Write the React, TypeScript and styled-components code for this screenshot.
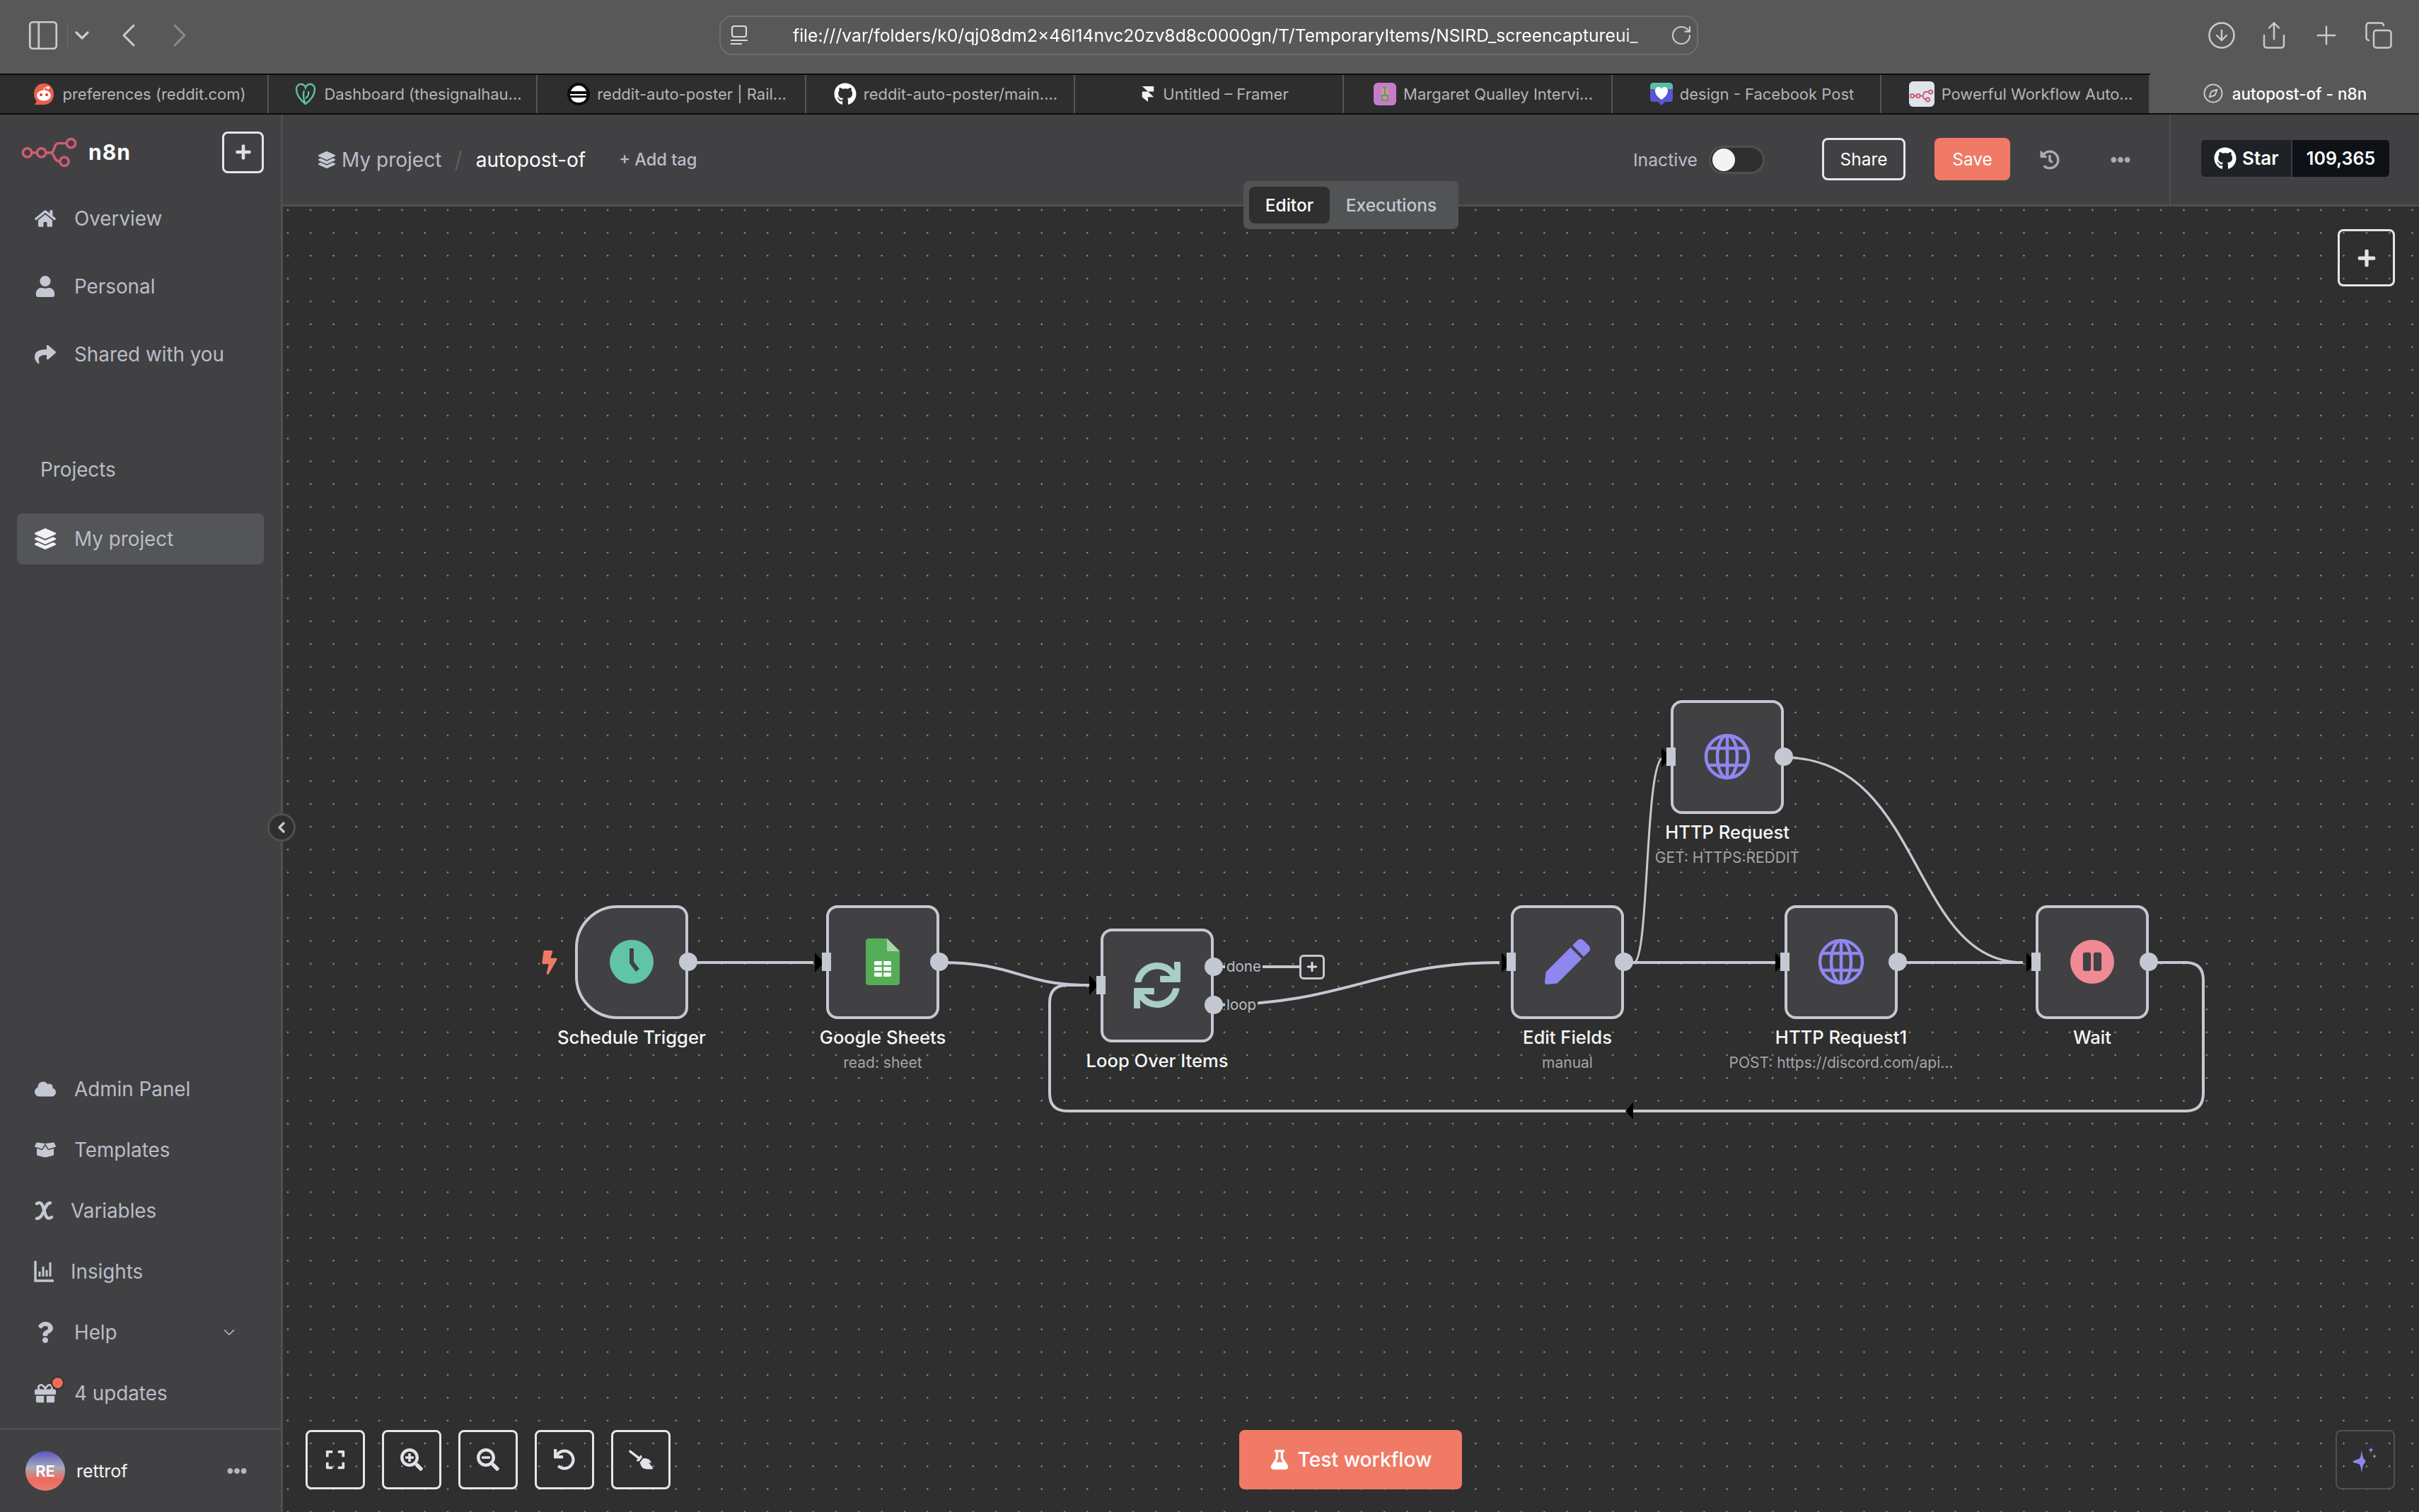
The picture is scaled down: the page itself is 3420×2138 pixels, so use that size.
import React from 'react';
import styled, { createGlobalStyle } from 'styled-components';
import {
  ChevronDown, ChevronLeft, ChevronRight, CircleArrowDown, Compass, Copy, PanelLeft, Plus, RotateCw, Share,
} from 'lucide-react';
import {
  FaBolt, FaBoxOpen, FaBroom, FaCloud, FaEllipsisH, FaExpand, FaFlask, FaGift, FaGithub, FaHistory, FaHome,
  FaLayerGroup, FaPause, FaPen, FaPlus, FaQuestion, FaSearchMinus, FaSearchPlus, FaShare, FaSync, FaUndo, FaUser,
} from 'react-icons/fa';

// page coordinates of the canvas origin, nodes and wires are given in page px
const CANVAS_X = 400;
const CANVAS_Y = 291.5;

const GlobalStyle = createGlobalStyle`
  html, body {
    margin: 0;
    padding: 0;
    width: 3420px;
    height: 2138px;
    overflow: hidden;
    background: #2e2f2e;
    font-family: Inter, "Noto Sans", sans-serif;
  }
  * { box-sizing: border-box; }
`;

const Page = styled.div`
  display: flex;
  flex-direction: column;
  width: 3420px;
  height: 2138px;
`;

/* browser chrome */
const Toolbar = styled.div`
  display: flex;
  align-items: center;
  height: 104px;
  padding: 0 36px 4px 36px;
  background: #585858;
  color: #c9cbcf;
`;

const ToolIcons = styled.div`
  display: flex;
  align-items: center;
  width: 981px;
`;

const SideToggle = styled.div`
  display: flex;
  align-items: center;
  height: 36px;
  padding-right: 9px;
  margin-right: 4px;
  border-right: 1px solid #6b6b6b;
`;

const NavArrows = styled.div`
  display: flex;
  align-items: center;
  gap: 16px;
  margin-left: 22px;
`;

const AddressBar = styled.div`
  display: flex;
  align-items: center;
  width: 1384px;
  height: 56px;
  padding: 0 6px 0 14px;
  border: 2px solid #6e6e6e;
  border-radius: 18px;
`;

const AddressText = styled.div`
  flex: 1;
  margin-left: 62px;
  color: #fff;
  font-size: 24.7px;
  white-space: nowrap;
  -webkit-mask-image: linear-gradient(to right, #000 94%, rgba(0, 0, 0, 0.35) 100%);
  mask-image: linear-gradient(to right, #000 94%, rgba(0, 0, 0, 0.35) 100%);
`;

const ChromeActions = styled.div`
  display: flex;
  align-items: center;
  gap: 32px;
  margin-left: auto;
`;

const TabStrip = styled.div`
  display: flex;
  height: 58px;
  background: #2e2e2e;
  border-top: 2px solid #0c0c0c;
  border-bottom: 2px solid #0c0c0c;
`;

const Tab = styled.div<{ $active?: boolean }>`
  display: flex;
  align-items: center;
  justify-content: center;
  gap: ${({ $active }) => ($active ? 12 : 10)}px;
  width: 380px;
  margin: ${({ $active }) => ($active ? '-2px 0 0' : '0')};
  padding-left: ${({ $active }) => ($active ? 0 : 16)}px;
  height: ${({ $active }) => ($active ? '56px' : 'auto')};
  border-right: ${({ $active }) => ($active ? 'none' : '2px solid #555')};
  background: ${({ $active }) => ($active ? '#585858' : 'transparent')};
  color: ${({ $active }) => ($active ? '#fff' : '#b4b4b4')};
  font-size: ${({ $active }) => ($active ? 22.5 : 22)}px;
  font-weight: ${({ $active }) => ($active ? 500 : 400)};
  white-space: nowrap;
`;

const Favicon = styled.svg`
  flex: none;
  width: 32px;
  height: 32px;
`;

/* app body */
const Body = styled.div`
  display: flex;
  flex: 1;
  min-height: 0;
`;

const Sidebar = styled.aside`
  position: relative;
  display: flex;
  flex-direction: column;
  flex: none;
  width: 400px;
  background: #414143;
  border-right: 3px solid #4f4f51;
`;

const LogoRow = styled.div`
  display: flex;
  align-items: center;
  justify-content: space-between;
  height: 111px;
  padding: 0 24px 5px 30px;
`;

const Logo = styled.div`
  display: flex;
  align-items: center;
  gap: 15px;
  color: #fff;
  font-size: 30px;
  font-weight: 700;
  letter-spacing: 1px;
`;

const IconButton = styled.button<{ $size?: number; $muted?: boolean }>`
  display: flex;
  align-items: center;
  justify-content: center;
  width: ${({ $size }) => $size ?? 59}px;
  height: ${({ $size }) => $size ?? 59}px;
  padding: 0;
  background: transparent;
  color: #dfe2e8;
  border: ${({ $muted }) => ($muted ? '2px solid #505152' : '3px solid #e4e6ea')};
  border-radius: 8px;
`;

const NavGroup = styled.nav<{ $gap: number }>`
  display: flex;
  flex-direction: column;
  gap: ${({ $gap }) => $gap}px;
  padding: 0 24px;
`;

const NavItem = styled.div<{ $active?: boolean }>`
  display: flex;
  align-items: center;
  gap: 25px;
  height: 72px;
  padding: 0 24px;
  border-radius: 8px;
  background: ${({ $active }) => ($active ? '#545557' : 'transparent')};
  color: #b9bdc7;
  font-size: 27.8px;
  white-space: nowrap;
`;

const NavIcon = styled.span<{ $narrow?: boolean; $light?: boolean }>`
  position: relative;
  display: flex;
  align-items: center;
  justify-content: center;
  flex: none;
  width: ${({ $narrow }) => ($narrow ? 28 : 32)}px;
  margin-right: ${({ $narrow }) => ($narrow ? -1 : 0)}px;
  color: ${({ $light }) => ($light ? '#f1f2f4' : '#c3c8d2')};
  font-size: 30px;
`;

const Badge = styled.span`
  position: absolute;
  top: -7px;
  right: -9px;
  width: 15px;
  height: 15px;
  border-radius: 50%;
  background: #f0695a;
  box-shadow: 0 0 0 2px #2e2f2e;
`;

const Chevron = styled.span`
  display: flex;
  margin-left: auto;
  margin-right: 12px;
  color: #b9bdc7;
`;

const ProjectsHeading = styled.div`
  margin: 110px 0 45px 57px;
  color: #b9bdc7;
  font-size: 27.8px;
`;

const BottomNav = styled.div`
  margin-top: auto;
  padding-bottom: 13px;
`;

const UserRow = styled.div`
  display: flex;
  align-items: center;
  height: 119px;
  padding: 0 48px 0 36px;
  border-top: 3px solid #4f4f51;
`;

const Avatar = styled.div`
  display: flex;
  align-items: center;
  justify-content: center;
  width: 56px;
  height: 56px;
  border-radius: 50%;
  background: linear-gradient(180deg, #5a57c4 0%, #a9a9b9 42%, #ef6a5a 72%, #ea7f79 100%);
  color: #fff;
  font-size: 22px;
  font-weight: 600;
`;

const UserName = styled.div`
  margin-left: 16px;
  color: #f3f4f6;
  font-size: 25px;
`;

const DotsMuted = styled.span`
  display: flex;
  margin-left: auto;
  color: #b4b7be;
  font-size: 28px;
`;

const CollapseKnob = styled.div`
  position: absolute;
  top: 988px;
  right: -21px;
  z-index: 5;
  display: flex;
  align-items: center;
  justify-content: center;
  width: 40px;
  height: 40px;
  border-radius: 50%;
  background: #2e2f2e;
  border: 3px solid #4f4f51;
  color: #c3c8d2;
`;

const Main = styled.main`
  position: relative;
  display: flex;
  flex-direction: column;
  flex: 1;
  min-width: 0;
`;

const Header = styled.header`
  display: flex;
  align-items: center;
  flex: none;
  height: 130px;
  background: #414143;
  border-bottom: 3px solid #4f4f51;
`;

const Crumbs = styled.div`
  display: flex;
  align-items: center;
  margin-left: 50px;
  color: #b9bdc7;
  font-size: 28px;
`;

const CrumbIcon = styled.span`
  display: flex;
  margin-right: 9px;
  color: #c3c8d2;
  font-size: 24px;
`;

const CrumbSlash = styled.span`
  margin: 0 19px 0 18px;
  color: #5a5b5d;
  font-size: 32px;
`;

const WorkflowName = styled.span`
  color: #fff;
`;

const AddTag = styled.span`
  margin-left: 47px;
  color: #b9bdc7;
  font-size: 23.6px;
  font-weight: 500;
`;

const HeaderActions = styled.div`
  display: flex;
  align-items: center;
  margin-left: auto;
  height: 100%;
`;

const StatusLabel = styled.span`
  color: #b9bdc7;
  font-size: 24.7px;
`;

const Toggle = styled.span`
  position: relative;
  width: 79px;
  height: 40px;
  margin: 0 81px 0 16px;
  border-radius: 20px;
  background: #2e2f2e;
  border: 3px solid #4f4f51;
`;

const ToggleKnob = styled.span`
  position: absolute;
  top: 1px;
  left: 2px;
  width: 32px;
  height: 32px;
  border-radius: 50%;
  background: #f3f3f5;
`;

const ShareButton = styled.button`
  width: 118px;
  height: 60px;
  margin-bottom: 2px;
  padding: 0;
  border-radius: 8px;
  border: 3px solid #e4e6ea;
  background: transparent;
  color: #fff;
  font-family: inherit;
  font-size: 24.4px;
  font-weight: 400;
`;

const SaveButton = styled(ShareButton)`
  width: 107px;
  margin-left: 41px;
  border: none;
  background: #f07a65;
`;

const HeaderGlyph = styled.span<{ $ml: number }>`
  display: flex;
  margin-left: ${({ $ml }) => $ml}px;
  color: #a9acb3;
  font-size: 28px;
`;

const GithubBox = styled.div`
  display: flex;
  align-items: center;
  height: 100%;
  margin-left: 55px;
  padding: 0 42px 4px 43px;
  border-left: 2px solid #4f4f51;
`;

const StarButton = styled.div`
  display: flex;
  height: 52px;
  border-radius: 5px;
  overflow: hidden;
  color: #fff;
  font-size: 25px;
  font-weight: 600;
`;

const StarLabel = styled.div`
  display: flex;
  align-items: center;
  gap: 8px;
  width: 129px;
  padding-left: 18px;
  background: #1e2226;
  border-right: 2px solid #3a3d41;
  font-size: 26px;
`;

const StarCount = styled.div`
  display: flex;
  align-items: center;
  justify-content: center;
  width: 137px;
  background: #0e1116;
`;

const ViewTabs = styled.div`
  position: absolute;
  top: 94px;
  left: 1358px;
  z-index: 4;
  display: flex;
  align-items: center;
  width: 304px;
  height: 68px;
  padding: 0 8px;
  border-radius: 8px;
  background: #525355;
`;

const ViewTab = styled.div<{ $active?: boolean }>`
  display: flex;
  align-items: center;
  justify-content: center;
  width: ${({ $active }) => ($active ? 114 : 174)}px;
  height: 52px;
  border-radius: 8px;
  background: ${({ $active }) => ($active ? '#2e2f2e' : 'transparent')};
  color: ${({ $active }) => ($active ? '#fff' : '#c3c8d2')};
  font-size: 24.5px;
  font-weight: 500;
`;

/* canvas */
const Canvas = styled.div`
  position: relative;
  flex: 1;
  background-color: #2e2f2e;
  background-image: radial-gradient(circle, #8f9090 1px, transparent 1.4px);
  background-size: 32.3px 32.3px;
  background-position: -9.25px -11.15px;
`;

const Wires = styled.svg`
  position: absolute;
  inset: -1.5px 0 0 0;
  width: 100%;
  height: 1848px;
`;

const NodeSlot = styled.div<{ $x: number; $y: number }>`
  position: absolute;
  left: ${({ $x }) => $x - CANVAS_X}px;
  top: ${({ $y }) => $y - CANVAS_Y}px;
  display: flex;
  flex-direction: column;
  align-items: center;
  width: 160px;
`;

const NodeBox = styled.div<{ $trigger?: boolean }>`
  position: relative;
  display: flex;
  align-items: center;
  justify-content: center;
  width: 160px;
  height: 161px;
  background: #414143;
  border: 4px solid #c4c8d2;
  border-radius: ${({ $trigger }) => ($trigger ? '60px 16px 16px 60px' : '16px')};
`;

const NodeName = styled.div`
  margin-top: 8px;
  color: #f5f6f8;
  font-size: 25.6px;
  font-weight: 500;
  line-height: 36px;
  white-space: nowrap;
`;

const NodeSub = styled.div`
  margin-top: 4px;
  color: #a4a5a9;
  font-size: 21px;
  line-height: 28px;
  white-space: nowrap;
`;

const OutPort = styled.span<{ $top: number }>`
  position: absolute;
  top: ${({ $top }) => $top}px;
  right: -17px;
  width: 26px;
  height: 26px;
  border-radius: 50%;
  background: #c4c8d2;
`;

const InPort = styled.span<{ $top: number }>`
  position: absolute;
  top: ${({ $top }) => $top}px;
  left: -10px;
  width: 13px;
  height: 26px;
  background: #c4c8d2;
`;

const PortLabel = styled.span<{ $top: number }>`
  position: absolute;
  top: ${({ $top }) => $top}px;
  left: 172px;
  padding: 0 2px;
  background: #2e2f2e;
  color: #b9bdc7;
  font-size: 20.5px;
  line-height: 26px;
`;

const TriggerBolt = styled.span`
  position: absolute;
  left: -57px;
  top: 60px;
  display: flex;
  color: #f07a65;
  font-size: 34px;
`;

const AddStub = styled.div`
  position: absolute;
  left: ${1837 - CANVAS_X}px;
  top: ${1349 - CANVAS_Y}px;
  display: flex;
  align-items: center;
  justify-content: center;
  width: 36px;
  height: 35px;
  border: 3px solid #c4c8d2;
  border-radius: 6px;
  background: #2e2f2e;
  color: #d6d9df;
  font-size: 16px;
`;

const NodeIcon = styled.span<{ $color: string; $size: number }>`
  display: flex;
  color: ${({ $color }) => $color};
  font-size: ${({ $size }) => $size}px;
`;

const PauseDisc = styled.span`
  display: flex;
  align-items: center;
  justify-content: center;
  width: 62px;
  height: 62px;
  border-radius: 50%;
  background: #f08a95;
  color: #414143;
  font-size: 30px;
`;

const CanvasControls = styled.div`
  position: absolute;
  left: 32px;
  bottom: 32px;
  display: flex;
  gap: 24px;
`;

const FlippedGlyph = styled.span`
  display: flex;
  transform: scaleX(-1);
`;

const TestButton = styled.button`
  position: absolute;
  left: ${1752 - CANVAS_X}px;
  bottom: 32px;
  display: flex;
  align-items: center;
  justify-content: center;
  gap: 12px;
  width: 315px;
  height: 84px;
  border: none;
  border-radius: 8px;
  background: #f07a65;
  color: #fff;
  font-family: inherit;
  font-size: 28.2px;
  font-weight: 500;
`;

const CanvasPlus = styled.div`
  position: absolute;
  top: 32px;
  right: 34px;
`;

const AssistButton = styled.div`
  position: absolute;
  right: 34px;
  bottom: 32px;
`;

const TABS = [
  { title: 'preferences (reddit.com)', icon: 'reddit' },
  { title: 'Dashboard (thesignalhau...', icon: 'heart' },
  { title: 'reddit-auto-poster | Rail...', icon: 'rail' },
  { title: 'reddit-auto-poster/main....', icon: 'github' },
  { title: 'Untitled – Framer', icon: 'framer' },
  { title: 'Margaret Qualley Intervi...', icon: 'square' },
  { title: 'design - Facebook Post', icon: 'bubble' },
  { title: 'Powerful Workflow Auto...', icon: 'n8n' },
];

const N8nMark: React.FC<{ width: number; height: number }> = ({ width, height }) => (
  <svg width={width} height={height} viewBox="28 194 84 46" fill="none" stroke="#d25c72" strokeWidth="3.6">
    <circle cx="37" cy="218" r="6.5" />
    <circle cx="58" cy="218" r="6.5" />
    <circle cx="102" cy="204" r="6.5" />
    <circle cx="92" cy="231" r="6.5" />
    <path d="M44 218h7M65 218h7c6 0 4-14 11-14h12M72 218c5 0 4 13 13 13" />
  </svg>
);

const TabIcon: React.FC<{ kind: string }> = ({ kind }) => {
  switch (kind) {
    case 'reddit':
      return (
        <Favicon viewBox="0 0 32 32">
          <path d="M16 1c8 0 14 6 14 15s-6 15-14 15H3l3-5C3 23 2 20 2 16 2 7 8 1 16 1z" fill="#e8604c" />
          <ellipse cx="16" cy="18" rx="10" ry="7.5" fill="#fff" />
          <circle cx="12" cy="17" r="2" fill="#d93a26" />
          <circle cx="20" cy="17" r="2" fill="#d93a26" />
          <circle cx="22" cy="7" r="2" fill="#fff" />
          <path d="M16 11l1-4 5 0" stroke="#fff" strokeWidth="1" fill="none" />
        </Favicon>
      );
    case 'heart':
      return (
        <Favicon viewBox="0 0 32 32" fill="none" stroke="#5fc0a5" strokeWidth="2.4">
          <path d="M16 30C8 24 3 17 3 9c0-4 3-7 6-7 3 0 6 2 7 5 1-3 4-5 7-5 3 0 6 3 6 7 0 8-5 15-13 21z" />
          <path d="M16 30c-3-6-4-14-2-19M16 22c3-2 5-6 4-10" />
        </Favicon>
      );
    case 'rail':
      return (
        <Favicon viewBox="0 0 32 32">
          <circle cx="16" cy="16" r="16" fill="#0b0b0b" />
          <path d="M5 12h22c-2-5-6-8-11-8S7 7 5 12zM4 16h23v2H4zM5 21h22c-2 5-6 7-11 7s-9-2-11-7z" fill="#fff" />
        </Favicon>
      );
    case 'github':
      return (
        <Favicon as="span">
          <FaGithub size={32} color="#fff" />
        </Favicon>
      );
    case 'framer':
      return (
        <Favicon viewBox="0 0 32 32" style={{ width: 22 }}>
          <path d="M4 0h24v11H16zM4 11h12l12 11H16v10L4 22z" fill="#f2f2f2" />
        </Favicon>
      );
    case 'square':
      return (
        <Favicon viewBox="0 0 32 32">
          <rect width="32" height="32" rx="6" fill="#c77cc8" />
          <rect x="11" y="6" width="10" height="20" fill="#e08aa0" />
          <path d="M13 7h6M16 7v10M12 18h8v7h-8z" stroke="#49a85a" strokeWidth="2" fill="none" />
        </Favicon>
      );
    case 'bubble':
      return (
        <Favicon viewBox="0 0 32 32">
          <path d="M5 0h22c3 0 5 2 5 5v18c0 3-2 4-5 4h-6l-5 5-5-5H5c-3 0-5-1-5-4V5c0-3 2-5 5-5z" fill="#5a55d6" />
          <path d="M5 0h22c3 0 5 2 5 5v4H0V5c0-3 2-5 5-5z" fill="#58bfa4" />
          <path d="M16 24C9 19 7 15 7 11c0-3 2-5 5-5 2 0 3 1 4 3 1-2 2-3 4-3 3 0 5 2 5 5 0 4-2 8-9 13z" fill="#fff" />
        </Favicon>
      );
    case 'n8n':
      return (
        <Favicon viewBox="0 0 36 36" style={{ width: 36, height: 36 }}>
          <rect width="36" height="36" rx="6" fill="#dfe3ea" />
          <g transform="translate(1 11) scale(0.4) translate(-28 -194)" fill="none" stroke="#d25c72" strokeWidth="5">
            <circle cx="37" cy="218" r="6.5" />
            <circle cx="58" cy="218" r="6.5" />
            <circle cx="102" cy="204" r="6.5" />
            <circle cx="92" cy="231" r="6.5" />
            <path d="M44 218h7M65 218h7c6 0 4-14 11-14h12M72 218c5 0 4 13 13 13" />
          </g>
        </Favicon>
      );
    default:
      return null;
  }
};

const GlobeIcon: React.FC = () => (
  <svg width="66" height="66" viewBox="0 0 66 66" fill="none" stroke="#8f87f0" strokeWidth="4.5">
    <circle cx="33" cy="33" r="30" />
    <ellipse cx="33" cy="33" rx="14" ry="30" />
    <path d="M33 3v60M7 21h52M7 45h52" />
  </svg>
);

const ClockIcon: React.FC = () => (
  <svg width="64" height="64" viewBox="0 0 64 64">
    <circle cx="32" cy="32" r="31" fill="#62c4a6" />
    <path d="M29 13h6v19l8 10-5 4-9-12z" fill="#414143" />
  </svg>
);

const SheetsIcon: React.FC = () => (
  <svg width="48" height="66" viewBox="0 0 48 66">
    <path d="M4 0h26l18 18v44c0 2-2 4-4 4H4c-2 0-4-2-4-4V4c0-2 2-4 4-4z" fill="#55ae57" />
    <path d="M30 0l18 18H30z" fill="#a6d4a4" />
    <rect x="12" y="32" width="24" height="22" rx="2" fill="#fff" />
    <path d="M12 39h24M12 47h24M24 32v22" stroke="#55ae57" strokeWidth="2.4" />
  </svg>
);

const VariableIcon: React.FC = () => (
  <svg width="28" height="32" viewBox="0 0 28 32" fill="none" stroke="#c3c8d2" strokeWidth="4.4" strokeLinecap="round">
    <path d="M4 6c4-3 7-1 9 5l3 10c2 6 5 7 9 4" />
    <path d="M23 5c-4 0-6 4-9 11s-5 11-10 11" />
  </svg>
);

const InsightsIcon: React.FC = () => (
  <svg width="28" height="30" viewBox="0 0 28 30" fill="none" stroke="#c3c8d2">
    <path d="M2 0v28h26" strokeWidth="3.4" />
    <path d="M8 22v-7M13 22V8M18 22v-9M23 22V2" strokeWidth="3" />
  </svg>
);

const AddressIcon: React.FC = () => (
  <svg width="26" height="28" viewBox="0 0 26 28" fill="none" stroke="#d6d8dc" strokeWidth="2.2">
    <rect x="2" y="1" width="20" height="15" rx="3" />
    <path d="M0 21h24M0 26h16" />
  </svg>
);

const SparkIcon: React.FC = () => (
  <svg width="40" height="40" viewBox="0 0 40 40">
    <path d="M15 6c1 10 3 13 3 13 3 1 3 5 0 7 0 0-2 3-3 13-1-10-3-13-4-13-6-1-9-3-9-3s3-3 9-4c1 0 3-3 4-13z" fill="#8f87f0" />
    <path d="M28 0c0 4 1 6 4 6-3 1-4 2-4 7 0-5-1-6-4-7 3 0 4-2 4-6z" fill="#8f87f0" />
    <path d="M33 11c0 3 1 4 4 4-3 0-4 1-4 5 0-4-1-5-4-5 3 0 4-1 4-4z" fill="#f08a95" />
  </svg>
);

const App: React.FC = () => (
  <Page>
    <GlobalStyle />
    <Toolbar>
      <ToolIcons>
        <SideToggle>
          <PanelLeft size={50} strokeWidth={1.3} />
        </SideToggle>
        <ChevronDown size={32} strokeWidth={2.4} />
        <NavArrows>
          <ChevronLeft size={56} strokeWidth={1.3} />
          <ChevronRight size={56} strokeWidth={1.3} color="#8a8a8a" />
        </NavArrows>
      </ToolIcons>
      <AddressBar>
        <AddressIcon />
        <AddressText>file:///var/folders/k0/qj08dm2x46l14nvc20zv8d8c0000gn/T/TemporaryItems/NSIRD_screencaptureui_</AddressText>
        <RotateCw size={32} strokeWidth={1.6} />
      </AddressBar>
      <ChromeActions>
        <CircleArrowDown size={42} strokeWidth={1.4} />
        <Share size={42} strokeWidth={1.4} />
        <Plus size={42} strokeWidth={1.4} />
        <Copy size={42} strokeWidth={1.4} />
      </ChromeActions>
    </Toolbar>
    <TabStrip>
      {TABS.map((t) => (
        <Tab key={t.title}>
          <TabIcon kind={t.icon} />
          {t.title}
        </Tab>
      ))}
      <Tab $active>
        <Compass size={30} strokeWidth={1.6} color="#c9cbcf" />
        autopost-of - n8n
      </Tab>
    </TabStrip>
    <Body>
      <Sidebar>
        <LogoRow>
          <Logo>
            <N8nMark width={80} height={44} />
            n8n
          </Logo>
          <IconButton>
            <FaPlus size={24} />
          </IconButton>
        </LogoRow>
        <NavGroup $gap={24}>
          <NavItem><NavIcon><FaHome /></NavIcon>Overview</NavItem>
          <NavItem><NavIcon><FaUser /></NavIcon>Personal</NavItem>
          <NavItem><NavIcon><FaShare /></NavIcon>Shared with you</NavItem>
        </NavGroup>
        <ProjectsHeading>Projects</ProjectsHeading>
        <NavGroup $gap={0}>
          <NavItem $active><NavIcon $light><FaLayerGroup /></NavIcon>My project</NavItem>
        </NavGroup>
        <BottomNav>
          <NavGroup $gap={14}>
            <NavItem><NavIcon><FaCloud /></NavIcon>Admin Panel</NavItem>
            <NavItem><NavIcon><FaBoxOpen /></NavIcon>Templates</NavItem>
            <NavItem><NavIcon $narrow><VariableIcon /></NavIcon>Variables</NavItem>
            <NavItem><NavIcon $narrow><InsightsIcon /></NavIcon>Insights</NavItem>
            <NavItem>
              <NavIcon><FaQuestion /></NavIcon>Help
              <Chevron><ChevronDown size={26} strokeWidth={1.5} /></Chevron>
            </NavItem>
            <NavItem><NavIcon><FaGift /><Badge /></NavIcon>4 updates</NavItem>
          </NavGroup>
        </BottomNav>
        <UserRow>
          <Avatar>RE</Avatar>
          <UserName>rettrof</UserName>
          <DotsMuted><FaEllipsisH /></DotsMuted>
        </UserRow>
        <CollapseKnob><ChevronLeft size={24} strokeWidth={3.4} /></CollapseKnob>
      </Sidebar>
      <Main>
        <Header>
          <Crumbs>
            <CrumbIcon><FaLayerGroup /></CrumbIcon>
            My project
            <CrumbSlash>/</CrumbSlash>
            <WorkflowName>autopost-of</WorkflowName>
            <AddTag>+ Add tag</AddTag>
          </Crumbs>
          <HeaderActions>
            <StatusLabel>Inactive</StatusLabel>
            <Toggle><ToggleKnob /></Toggle>
            <ShareButton>Share</ShareButton>
            <SaveButton>Save</SaveButton>
            <HeaderGlyph $ml={42}><FaHistory /></HeaderGlyph>
            <HeaderGlyph $ml={72}><FaEllipsisH /></HeaderGlyph>
            <GithubBox>
              <StarButton>
                <StarLabel><FaGithub size={32} />Star</StarLabel>
                <StarCount>109,365</StarCount>
              </StarButton>
            </GithubBox>
          </HeaderActions>
        </Header>
        <ViewTabs>
          <ViewTab $active>Editor</ViewTab>
          <ViewTab>Executions</ViewTab>
        </ViewTabs>
        <Canvas>
          <Wires viewBox="400 290 3020 1848" preserveAspectRatio="xMinYMin slice" fill="none" stroke="#c4c8d2" strokeWidth="4">
            <path d="M973 1360H1150" />
            <path d="M1328 1360C1440 1360 1440 1392 1540 1392" />
            <path d="M1716 1366H1838" />
            <path d="M1716 1420C1900 1420 1950 1360 2120 1360" />
            <path d="M2296 1360H2510" />
            <path d="M2682 1360H2860" />
            <path d="M2310 1360C2332 1360 2325 1070 2352 1070" strokeWidth="3" />
            <path d="M2522 1070C2720 1070 2700 1360 2860 1360" strokeWidth="3.4" />
            <path d="M3037 1360H3090Q3115 1360 3115 1385V1545Q3115 1570 3090 1570H1509Q1484 1570 1484 1545V1417Q1484 1392 1509 1392H1540" />
            <g fill="#000" stroke="none">
              <path d="M1152 1346l13 14-13 14zM1540 1378l13 14-13 14zM2123 1346l13 14-13 14zM2510 1346l13 14-13 14zM2865 1346l13 14-13 14zM2349 1056l13 14-13 14zM2298 1570l11-12v24z" />
            </g>
          </Wires>

          <NodeSlot $x={813} $y={1279}>
            <NodeBox $trigger>
              <TriggerBolt><FaBolt /></TriggerBolt>
              <ClockIcon />
              <OutPort $top={63} />
            </NodeBox>
            <NodeName>Schedule Trigger</NodeName>
          </NodeSlot>

          <NodeSlot $x={1168} $y={1279}>
            <NodeBox>
              <InPort $top={63} />
              <SheetsIcon />
              <OutPort $top={63} />
            </NodeBox>
            <NodeName>Google Sheets</NodeName>
            <NodeSub>read: sheet</NodeSub>
          </NodeSlot>

          <NodeSlot $x={1556} $y={1312}>
            <NodeBox>
              <InPort $top={63} />
              <NodeIcon $color="#a9cdc7" $size={66}><FaSync /></NodeIcon>
              <OutPort $top={37} />
              <OutPort $top={91} />
              <PortLabel $top={37}>done</PortLabel>
              <PortLabel $top={91}>loop</PortLabel>
            </NodeBox>
            <NodeName>Loop Over Items</NodeName>
          </NodeSlot>
          <AddStub><FaPlus /></AddStub>

          <NodeSlot $x={2136} $y={1279}>
            <NodeBox>
              <InPort $top={63} />
              <NodeIcon $color="#8f87f0" $size={64}><FaPen /></NodeIcon>
              <OutPort $top={63} />
            </NodeBox>
            <NodeName>Edit Fields</NodeName>
            <NodeSub>manual</NodeSub>
          </NodeSlot>

          <NodeSlot $x={2362} $y={989}>
            <NodeBox>
              <InPort $top={63} />
              <GlobeIcon />
              <OutPort $top={63} />
            </NodeBox>
            <NodeName>HTTP Request</NodeName>
            <NodeSub>GET: HTTPS:REDDIT</NodeSub>
          </NodeSlot>

          <NodeSlot $x={2523} $y={1279}>
            <NodeBox>
              <InPort $top={63} />
              <GlobeIcon />
              <OutPort $top={63} />
            </NodeBox>
            <NodeName>HTTP Request1</NodeName>
            <NodeSub>POST: https://discord.com/api...</NodeSub>
          </NodeSlot>

          <NodeSlot $x={2878} $y={1279}>
            <NodeBox>
              <InPort $top={63} />
              <PauseDisc><FaPause /></PauseDisc>
              <OutPort $top={63} />
            </NodeBox>
            <NodeName>Wait</NodeName>
          </NodeSlot>

          <CanvasPlus>
            <IconButton $size={81}><FaPlus size={28} /></IconButton>
          </CanvasPlus>
          <CanvasControls>
            <IconButton $size={84}><FaExpand size={30} /></IconButton>
            <IconButton $size={84}><FaSearchPlus size={32} /></IconButton>
            <IconButton $size={84}><FaSearchMinus size={32} /></IconButton>
            <IconButton $size={84}><FaUndo size={30} /></IconButton>
            <IconButton $size={84}><FlippedGlyph><FaBroom size={34} /></FlippedGlyph></IconButton>
          </CanvasControls>
          <TestButton><FaFlask size={28} />Test workflow</TestButton>
          <AssistButton>
            <IconButton $size={84} $muted><SparkIcon /></IconButton>
          </AssistButton>
        </Canvas>
      </Main>
    </Body>
  </Page>
);

export default App;
